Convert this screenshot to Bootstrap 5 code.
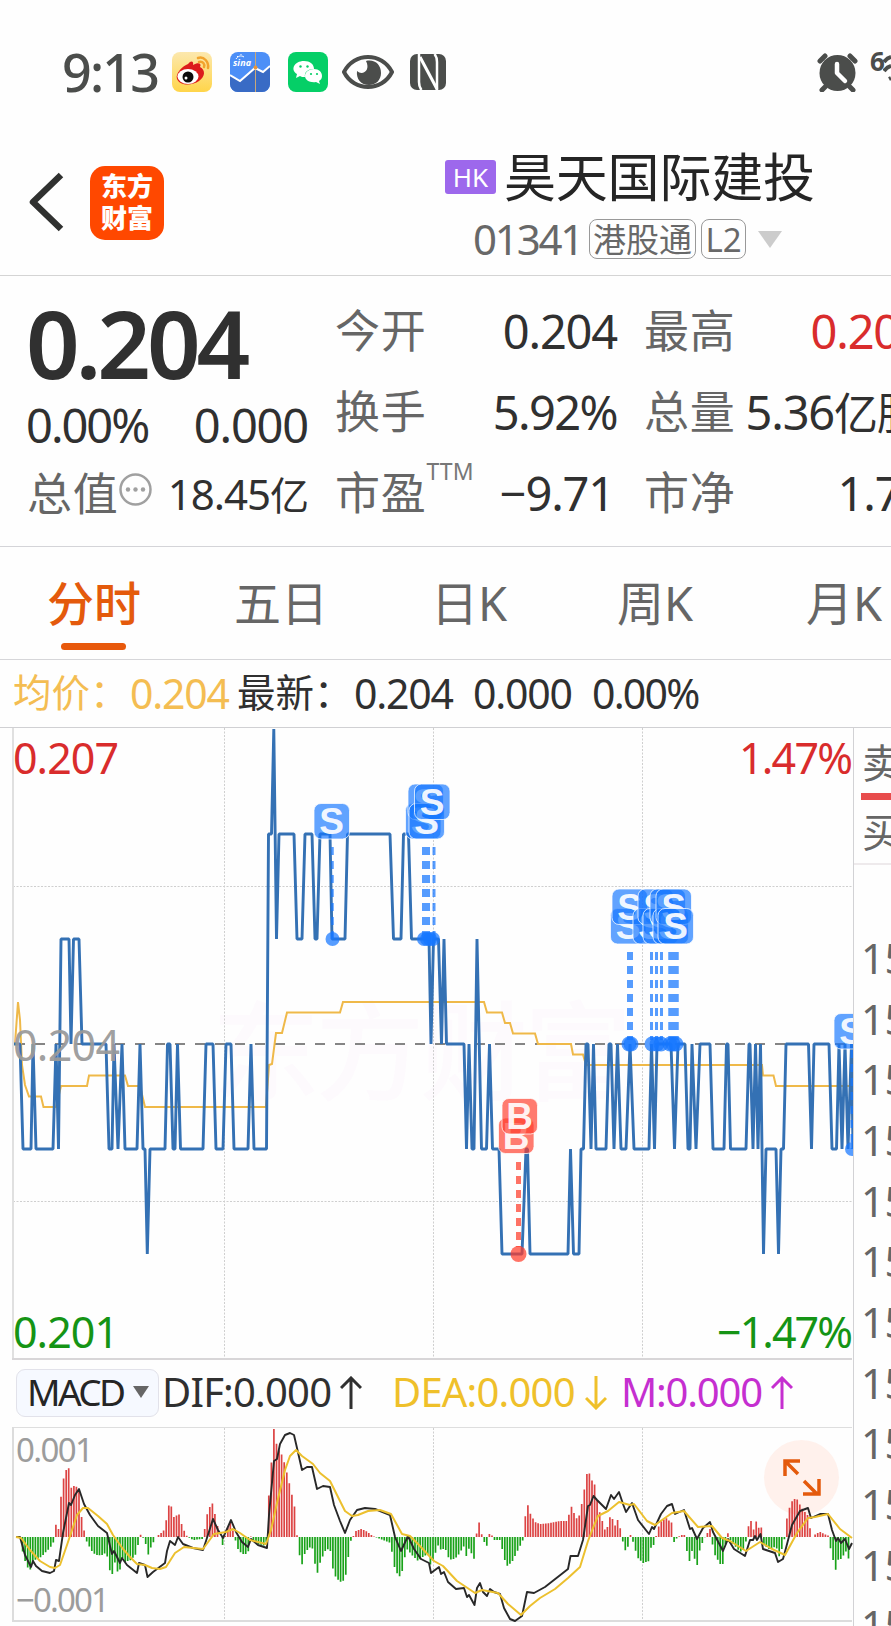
<!DOCTYPE html>
<html lang="zh-CN">
<head>
<meta charset="utf-8">
<meta name="viewport" content="width=device-width, initial-scale=1">
<title>昊天国际建投 01341</title>
<link href="https://cdn.jsdelivr.net/npm/bootstrap@5.3.0/dist/css/bootstrap.min.css" rel="stylesheet">
<style>
  body{width:891px;height:1626px;overflow:hidden;background:#fefefe;color:#303030;
    font-family:"Noto Sans","Noto Sans CJK SC",sans-serif;line-height:1;font-size:46px;white-space:nowrap}
  svg{display:block;flex:none}
  .status{height:131px;padding:12px 0 0 62px}
  .clock{font-size:52px;font-weight:500;color:#4b4d4b;width:110px;letter-spacing:-1.8px}
  .status-icons{gap:18px}
  .six{font-size:26px;font-weight:700;color:#4b4d4b;width:13px;margin:-22px 0 0 12px;letter-spacing:-2px}
  .head{height:145px;border-bottom:1px solid #d4d4d4}
  .back{margin:-2px 25px 0 28px}
  .logo{width:74px;height:74px;border-radius:15px;background:#ff4800;color:#fff;font-weight:900;font-size:26px;line-height:32px;padding-top:4px}
  .head-main{margin-left:281px;width:400px;margin-top:2px}
  .hk{width:51px;height:34px;background:#9d68ec;color:#fff;border-radius:3px;font-size:26px;margin-right:8px}
  .stock{font-size:52px;color:#252525;letter-spacing:-.2px;margin-top:-1px}
  .code{font-size:42px;color:#686868;letter-spacing:-2.2px;width:116px;margin-left:28px}
  .chip{height:40px;border:1.5px solid #999;border-radius:8px;color:#686868;font-size:33px}
  .quote{height:271px;border-bottom:1px solid #d4d4d8;padding:14px 0 0 27px}
  .q-row{height:81px}
  .quote>div{flex:none}
  .colA{width:281px;margin-right:27px}
  .colB{width:282px;margin-right:27px}
  .colC{width:280px}
  .lab{color:#666;font-size:45px;letter-spacing:.8px}
  .num{font-size:47px;letter-spacing:-1.2px;padding-top:2px}
  .big{font-size:94px;font-weight:600;letter-spacing:-4.2px;height:106px;margin-left:-1px}
  .ttm{font-size:23px;color:#777;margin-top:-42px}
  .tabs{height:113px;border-bottom:1px solid #d6d6d9;color:#666}
  .tabs .tab-i{height:110px;padding-top:2px;font-size:47px;position:relative}
  .tab-on{color:#e45a0c;font-weight:500}
  .tab-on::after{content:"";position:absolute;left:14px;top:96px;width:65px;height:7px;border-radius:4px;background:#e8590c}
  .info{height:68px;border-bottom:1px solid #d0d0d3;font-size:41px;letter-spacing:-1.2px}
  .info .zh{font-size:38.5px;letter-spacing:0;margin-top:-2px}
  .avg{color:#f4bd52}
  .plot{width:853px;flex:none;overflow:hidden}
  .side{width:38px;height:898px;border-left:1px solid #d2d2d5;color:#666;overflow:hidden;font-size:41px}
  .side .ask{height:137px;border-bottom:2px solid #eeeaec;padding-left:8px;font-size:40px}
  .side .bar{height:7px;background:#e84c4c;margin-left:-1px}
  .side .tick{height:60.7px;padding-left:7px}
  .macd-row{height:66px;padding-left:16px;font-size:40px;letter-spacing:-.8px}
  .macd-row>*{flex:none}
  .macd-row>span{margin-top:-2px}
  .macd-btn{width:143px;height:48px;background:#f6f9ff;border:1px solid #e2e2ea;border-radius:9px;font-size:37px;padding:0 0 3px 10px;letter-spacing:-2.6px;color:#252525}
</style>
</head>
<body>
<div class="status d-flex align-items-center">
  <div class="clock">9:13</div>
  <div class="status-icons d-flex align-items-center">
    <svg width="40" height="40" viewBox="0 0 40 40"><defs><linearGradient id="wb" x2="0" y2="1"><stop stop-color="#fce8ae"/><stop offset="1" stop-color="#ffd54a"/></linearGradient></defs><rect width="40" height="40" rx="8" fill="url(#wb)"/><path d="M16 12c3-4 6-3 5 1 5-3 9-2 7 2 6 3 5 10-1 14-7 5-19 5-22-2-2-6 6-13 11-15z" fill="#dc1c1c"/><ellipse cx="16" cy="24.500" rx="10.500" ry="7.500" fill="#fff"/><circle cx="16" cy="25" r="5.500" fill="#0c0c0c"/><circle cx="14" cy="26" r="1.500" fill="#fff"/><path d="M26 6c6-2 11 4 10 10M27 10c4-1 6 2 5 5" fill="none" stroke="#f2a32d" stroke-width="2.500" stroke-linecap="round"/></svg>
    <svg width="40" height="40" viewBox="0 0 40 40"><rect width="40" height="40" rx="8" fill="#4c8ff7"/><path d="M0 23l10 6 15-13 8 4 7-6v18a8 8 0 0 1-8 8H8a8 8 0 0 1-8-8z" fill="#396bc5"/><path d="M25.500 0v40" stroke="#c9a878" stroke-width="1"/><path d="M0 23l10 6 15-13 8 4 7-6" fill="none" stroke="#fff" stroke-width="2"/><circle cx="25.500" cy="15.500" r="2" fill="#e8953a"/><path d="M6 7c2-3 5-4 8-2M8 5l-1-1M11 3V2" stroke="#fff" fill="none"/><text x="3" y="14" font-size="9" font-weight="700" font-style="italic" fill="#fff" textLength="18">sina</text></svg>
    <svg width="40" height="40" viewBox="0 0 40 40"><rect width="40" height="40" rx="8" fill="#05cf67"/><path d="M16 9c6 0 10 3 10 8-6 0-10 3-9 8-2 0-4 0-5-1l-4 2 1-4C2 18 6 9 16 9z" fill="#fff"/><path d="M26 17c5 0 8 3 8 7 0 2-1 4-3 5l1 3-4-2c-6 1-11-2-11-6s4-7 9-7z" fill="#fff"/><g fill="#05cf67"><circle cx="12.500" cy="14.500" r="1.200"/><circle cx="19.500" cy="14.500" r="1.200"/><circle cx="23" cy="22" r="1.100"/><circle cx="29" cy="22" r="1.100"/></g></svg>
    <svg style="margin-left:-4px" width="52" height="36" viewBox="0 0 52 36"><path d="M2 18C12-2 40-2 50 18 40 38 12 38 2 18z" fill="none" stroke="#4b4d4b" stroke-width="4"/><path d="M24 7c9-2 15 4 15 12 0 7-5 12-12 12-8 0-13-6-12-14 5 5 14 0 9-10z" fill="#4b4d4b"/></svg>
    <svg style="margin-left:-2px" width="36" height="36" viewBox="0 0 36 36"><rect width="36" height="36" rx="7" fill="#4b4d4b"/><path d="M9 0v28q0 5 2.500 8M27 36V8q0-5-2.500-8" fill="none" stroke="#fff" stroke-width="2.500"/><path d="M10 3l17 32" stroke="#fff" stroke-width="3"/></svg>
  </div>
  <svg class="ms-auto" width="41" height="40" viewBox="0 0 41 40"><g stroke="#4b4d4b" stroke-width="5" stroke-linecap="round"><path d="M3 9l5-5M38 9l-5-5M8 35l-3 3M33 35l3 3"/></g><circle cx="20.500" cy="21" r="18" fill="#4b4d4b"/><path d="M20 12v9l8 8" fill="none" stroke="#fff" stroke-width="4.500" stroke-linecap="round" stroke-linejoin="round"/></svg>
  <div class="six">6</div>
  <svg width="8" height="40" viewBox="0 0 8 40"><path d="M1 10q3-4 7-5M1 19q3-4 7-5M6 27l2-1" stroke="#4b4d4b" stroke-width="4" fill="none"/></svg>
</div>

<header class="head d-flex align-items-center">
  <svg class="back" width="37" height="60" viewBox="0 0 37 60"><path d="M33 3L5 30l28 27" fill="none" stroke="#303130" stroke-width="6.500" stroke-linejoin="round"/></svg>
  <div class="logo text-center" style="margin-top:-1px">东方<br>财富</div>
  <div class="head-main">
    <div class="d-flex align-items-center" style="height:70px">
      <span class="hk d-flex align-items-center justify-content-center">HK</span><span class="stock">昊天国际建投</span>
    </div>
    <div class="d-flex align-items-center" style="height:54px">
      <span class="code">01341</span>
      <span class="chip d-flex align-items-center justify-content-center" style="width:107px">港股通</span>
      <span class="chip d-flex align-items-center justify-content-center" style="width:45px;margin-left:5px">L2</span>
      <svg style="margin-left:12px" width="24" height="17"><path d="M0 0h24L12 17z" fill="#ccc"/></svg>
    </div>
  </div>
</header>

<section class="quote d-flex">
  <div class="colA">
    <div class="big d-flex align-items-center">0.204</div>
    <div class="d-flex align-items-center justify-content-between" style="height:57px"><span class="num" style="letter-spacing:-2px;margin-left:-1px">0.00%</span><span class="num">0.000</span></div>
    <div class="d-flex align-items-center q-row"><span class="lab">总值</span>
      <svg style="margin:-8px 0 0 0" width="33" height="33" viewBox="0 0 33 33"><circle cx="16.500" cy="16.500" r="15" fill="none" stroke="#a0a0a0" stroke-width="2.500"/><g fill="#a0a0a0"><circle cx="9" cy="16.500" r="2.200"/><circle cx="16.500" cy="16.500" r="2.200"/><circle cx="24" cy="16.500" r="2.200"/></g></svg>
      <span class="ms-auto" style="font-size:42px;letter-spacing:-1px">18.45<span style="font-size:39px">亿</span></span></div>
  </div>
  <div class="colB">
    <div class="d-flex align-items-center justify-content-between q-row"><span class="lab">今开</span><span class="num">0.204</span></div>
    <div class="d-flex align-items-center justify-content-between q-row"><span class="lab">换手</span><span class="num" style="letter-spacing:-1.600px">5.92%</span></div>
    <div class="d-flex align-items-center q-row"><span class="lab">市盈</span><span class="ttm">TTM</span><span class="num ms-auto" style="margin-right:3px">−9.71</span></div>
  </div>
  <div class="colC">
    <div class="d-flex align-items-center q-row"><span class="lab">最高</span><span class="num" style="color:#d92c2c;margin-left:75px">0.207</span></div>
    <div class="d-flex align-items-center q-row"><span class="lab">总量</span><span class="num" style="margin-left:10px">5.36<span style="font-size:44px">亿股</span></span></div>
    <div class="d-flex align-items-center q-row"><span class="lab">市净</span><span class="num" style="margin-left:102px">1.70</span></div>
  </div>
</section>

<nav class="tabs d-flex">
  <div class="tab-i tab-on d-flex align-items-center" style="margin-left:47px;width:187px">分时</div>
  <div class="tab-i d-flex align-items-center" style="width:197px">五日</div>
  <div class="tab-i d-flex align-items-center" style="width:186px">日K</div>
  <div class="tab-i d-flex align-items-center" style="width:189px">周K</div>
  <div class="tab-i d-flex align-items-center">月K</div>
</nav>

<div class="info d-flex align-items-center">
  <span class="zh avg" style="margin-left:13px;width:117px">均价：</span><span class="avg" style="width:107px">0.204</span>
  <span class="zh" style="width:117px">最新：</span><span style="width:119px">0.204</span><span style="width:119px">0.000</span><span style="letter-spacing:-1.800px">0.00%</span>
</div>

<main class="d-flex">
  <div class="plot">
    <svg width="853" height="632" viewBox="0 728 853 632" id="price">
      <text x="212" y="1092" font-size="108" font-weight="500" textLength="420" fill="#fdfafd">东方财富</text>
      <g stroke="#cfcfcf" stroke-dasharray="2 1.500" fill="none"><path d="M224.500 728V1359M433.500 728V1359M642.500 728V1359M13 886.500H853M13 1201.500H853"/></g>
      <path d="M13 728V1359" stroke="#e0e0e0" stroke-width="2"/><path d="M12 1359H852" stroke="#d8d6d8" stroke-width="2"/>
      <path d="M15 1044H852" stroke="#858585" stroke-width="2" stroke-dasharray="10 10"/>
      <polyline fill="none" stroke="#efb949" stroke-width="2" points="15,1044 18,1002 20,1020 22,1065 25,1085 29,1096.5 41,1096.5 43.5,1107 56,1107 61,1086 87,1086 89,1075.5 125,1075.5 128,1086 140,1086 145,1107 266,1107 269,1065 272,1064 276,1033 282,1033 287,1012.5 340,1012.5 343,1002 484,1002 487,1012.5 502,1012.5 505,1023 510,1023 513,1033.5 535,1033.5 538,1044 571,1044 573,1054.5 583,1054.5 586,1065 762,1065 763,1075.500 773.500,1075.500 776,1086 852,1086"/>
      <polyline fill="none" stroke="#3471b4" stroke-width="2.900" stroke-linejoin="bevel" points="14,1044 20,1044 23,1149 31,1149 33,1044 36,1149 53,1149 56,1044 58.5,1149 61,939 69,939 71,1044 73.5,939 79,939 82,1044 106,1044 109,1149 112,1149 114,1044 118,1149 122,1044 125,1149 137,1149 140,1044 143,1149 145,1149 147.3,1254 150,1149 165,1149 167.5,1044 170,1044 173,1149 175,1149 177.5,1044 180.5,1149 203,1149 206,1044 213,1044 216,1149 223,1149 226,1044 231,1044 234,1149 248,1149 251,1044 254,1149 266.5,1149 268.5,834 271.5,834 273.8,729 276.5,939 279,834 294,834 297,939 302,939 305,834 312,834 315,939 317,939 320,834 330,834 332,939 345,939 347.5,834 390,834 393.5,939 401,939 403.5,834 408.5,834 411.5,939 429,939 431,1044 433.5,939 438.5,939 441.5,1044 444,939 446.5,1044 464,1044 466.5,1149 469,1044 472,1149 474,1149 477,939 481.5,1149 486.5,1149 489.5,1044 492.5,1149 499,1149 502,1254 522,1254 526,1149 527.5,1149 530,1254 568,1254 570.5,1149 573.5,1254 579,1254 581,1149 583.5,1149 586,1044 588,1044 591,1149 593.5,1044 596,1149 606,1149 609,1044 611,1044 614,1149 617.5,1044 621,1149 626,1149 630,1044 634,1149 649,1149 651.5,1044 654.5,1149 657,1044 671,1044 674.5,1149 678,1044 685,1044 688,1149 690,1149 692,1044 696,1149 700,1044 710,1044 713,1149 724,1149 726.5,1044 728,1044 730.5,1149 746,1149 749,1044 750,1044 753,1149 755.5,1044 758,1149 760.5,1044 763.5,1254 766,1149 776,1149 778.5,1254 781,1149 783.5,1149 786,1044 808.5,1044 811.5,1149 814,1044 829,1044 832,1149 836.5,1149 839,1044 842,1149 845,1044 848,1149 851.5,1044 853,1149"/>
      <g id="marks"></g>
      <g font-size="43">
        <text x="13" y="774" textLength="106" fill="#d92c2c">0.207</text>
        <text x="853" y="774" text-anchor="end" textLength="114" fill="#d92c2c">1.47%</text>
        <text x="13" y="1061" textLength="107" fill="#9a9a9a" fill-opacity=".95">0.204</text>
        <text x="13" y="1348" textLength="106" fill="#159415">0.201</text>
        <text x="853" y="1348" text-anchor="end" textLength="136" fill="#159415">−1.47%</text>
      </g>
    </svg>
    <div class="macd-row d-flex align-items-center">
      <div class="macd-btn d-flex align-items-center"><span style="width:106px">MACD</span><svg width="16" height="12"><path d="M0 0h16L8 12z" fill="#666"/></svg></div>
      <span style="margin-left:3px;width:178px">DIF:0.000</span>
      <svg width="22" height="34" viewBox="0 0 22 34"><path d="M11 33V2M1 12L11 2l10 10" fill="none" stroke="#303030" stroke-width="3"/></svg>
      <span style="margin-left:30px;width:193px;letter-spacing:-.8px;color:#efc02a">DEA:0.000</span>
      <svg width="22" height="34" viewBox="0 0 22 34"><path d="M11 0v31M1 22l10 10 10-10" fill="none" stroke="#efc02a" stroke-width="3"/></svg>
      <span style="margin-left:14px;width:150px;letter-spacing:-1.200px;color:#c52fd0">M:0.000</span>
      <svg width="22" height="34" viewBox="0 0 22 34"><path d="M11 33V2M1 12L11 2l10 10" fill="none" stroke="#c52fd0" stroke-width="3"/></svg>
    </div>
    <svg width="853" height="200" viewBox="0 1426 853 200">
      <circle cx="801.500" cy="1477.500" r="37.500" fill="#fff1ec"/>
      <path d="M224.500 1428V1620M433.500 1428V1620M642.500 1428V1620" stroke="#cfcfcf" stroke-dasharray="2 1.500"/>
      <path d="M13 1427.500H852" stroke="#dedede"/><path d="M13 1427V1622M12 1621H852" stroke="#dcdcdc" stroke-width="2" fill="none"/>
      <path id="up" stroke="#dc4343" stroke-width="1.700"/><path id="down" stroke="#19a219" stroke-width="1.700"/>
      <polyline fill="none" stroke="#282828" stroke-width="1.900" stroke-linejoin="round" points="16,1537 20,1537 25,1555 31,1567 33,1561 36,1566 42,1571 50,1573 54,1571 56,1560 59,1561 63,1533 69,1503 71,1505 75,1495 79,1489 84,1504 90,1515 98,1526 107,1533 110,1546 112,1554 114,1551 117,1557 120,1563 122,1558 127,1565 137,1573 139,1563 145,1565 147.5,1577 153,1572 165,1563 167,1551 170,1541 175,1545 178,1537 183,1544 193,1548 203,1550 206,1541 213,1519 218,1530 223,1538 231,1520 236,1532 242,1542 248,1547 251,1539 258,1545 267,1548 269,1515 274,1461 277,1459 280,1444 285,1435 290,1433 294,1435 297,1448 302,1470 307,1467 312,1467 317,1489 323,1486 330,1487 334,1505 340,1521 345,1533 350,1520 357,1510 365,1508 375,1509 390,1515 395,1537 401,1551 408,1536 414,1549 421,1559 429,1563 431,1573 439,1567 441,1574 444,1572 448,1582 456,1589 464,1588 467,1597 469,1595 474.5,1605 477,1588 480,1583 483,1592 487,1596 490,1589 494,1592 500,1594 504,1608 510,1619 515,1621 522,1616 527,1592 534,1593 545,1587 568,1569 570.5,1556 578,1556 583,1540 588,1506 590,1505 593.5,1496 597,1500 606,1509 611,1495 614,1499 619,1492 623,1504 626,1512 632,1503 638,1520 649,1534 652,1527 654,1529 661,1514 667,1506 672,1504 675,1514 684,1510 690,1529 692,1528 697,1539 703,1528 710,1522 713,1532 723,1551 728,1539 734,1549 745,1556 750,1540 753,1540 755,1536 757,1540 760.5,1534 763,1549 775,1553 778,1562 783,1559 786,1548 792,1525 800,1511 808,1508 811,1518 820,1514 828,1514 832,1530 836,1541 838,1538 841,1543 845,1539 849,1549 852,1543"/>
      <polyline fill="none" stroke="#ecc02e" stroke-width="2" stroke-linejoin="round" points="16,1537 21,1538 30,1550 40,1561 50,1567 55,1568 60,1565 67,1545 77,1515 83,1508 88,1508 98,1516 107,1524 113,1535 123,1549 131,1558 137,1564 145,1565 152,1568 160,1569 166,1567 175,1553 184,1547 203,1549 214,1534 220,1533 226,1532 233,1529 240,1533 250,1540 266,1544 271,1530 277,1503 285,1470 290,1456 296,1450 302,1456 313,1464 320,1473 330,1481 345,1511 352,1516 358,1515 368,1511 380,1510 391,1514 402,1534 410,1536 418,1544 434,1561 443,1566 457,1581 475,1593 482,1590 498,1593 508,1604 521,1615 530,1606 540,1598 555,1589 568,1578 580,1567 588,1541 593,1528 598,1516 608,1511 619,1502 630,1505 634,1504 647,1521 655,1525 672,1513 684,1511 698,1527 712,1526 722,1538 730,1541 746,1551 760,1542 772,1549 785,1555 797,1533 808,1518 815,1517 828,1514 840,1529 852,1538"/>
      <path d="M798 1474l-13-13M785 1476v-15h15M804 1481l13 13M819 1479v15h-16" fill="none" stroke="#e45a0c" stroke-width="3.500"/>
      <g font-size="33" fill="#9c9c9c"><text x="16" y="1462" textLength="78">0.001</text><text x="16" y="1612" textLength="94">−0.001</text></g>
    </svg>
  </div>
  <aside class="side">
    <div class="ask d-flex flex-column">
      <div style="height:65px;padding-top:15px">卖</div><div class="bar" style="width:40px"></div><div style="padding-top:12px">买</div>
    </div>
    <div style="height:63px"></div>
    <div id="ticks"></div>
  </aside>
</main>
<script src="https://cdn.jsdelivr.net/npm/bootstrap@5.3.0/dist/js/bootstrap.bundle.min.js"></script>
<script>
// Trade markers: dashed guides, dots and lettered badges
let m='';
const dash=(x,w,y1,y2,c)=>m+=`<path d="M${x} ${y1}V${y2}" stroke="${c}" stroke-width="${w}" stroke-dasharray="8 6" opacity=".72"/>`;
const dot=(x,y,c,r=7)=>m+=`<circle cx="${x}" cy="${y}" r="${r}" fill="${c}" opacity=".72"/>`;
const tag=(x,y,t,c)=>m+=`<rect x="${x}" y="${y}" width="35.5" height="35.5" rx="7" fill="${c}" fill-opacity=".68" stroke="#fff" stroke-opacity=".75"/><text x="${x+17.7}" y="${y+30.5}" font-family="Liberation Sans" font-size="37" font-weight="700" fill="#fff" fill-opacity=".92" text-anchor="middle">${t}</text>`;
const B='#1677ff',R='#ff3d2b';
dash(332.5,2.5,847,939,B);dot(332.5,939,B);
dash(426,8,847,939,B);dash(434,3,847,939,B);[424,427,430,433].forEach(x=>dot(x,939,B));
dash(630,6,952,1040,B);[651.5,656.5,661.5].forEach(x=>dash(x,3,952,1040,B));dash(673.5,10.500,952,1040,B);
[629,631,652,657,661,670,673,676].forEach(x=>dot(x,1044,B,7.5));
tag(314,803.5,'S',B);[[405.500,803.5],[408,784],[409,803.5],[414.5,784],[610.5,908.5],[612,889],[633,908.5],[638,889],[643,908.5],[650,889],[653,908.5],[656,889],[658,908.5]].forEach(p=>tag(p[0],p[1],'S',B));
dash(852,3,1050,1149,B);dot(852,1149,B);tag(834,1013.5,'S',B);
dash(518.5,5,1162,1247,R);dot(518.5,1254,R,8);tag(498.5,1118,'B',R);tag(502,1098.5,'B',R);
document.getElementById('marks').innerHTML=m;

// MACD histogram: x, signed height
const H=[20,0,23,-17,26,-27,28,-31,31,-33,33,-26,36,-22,41,-20,45,-16,49,-12,53,-7,54.5,0,56,13,58.5,8,61,40,63.5,58,66,67,69,69,71,49,74,51,77,50,79,48,81,23,84,7,86,-3,89,-9,93,-16,98,-18.5,103,-18,106.5,-15,109,-31,112,-40,114,-22,117,-34,119.5,-36,122,-20,125,-25,131,-23,137,-16,139.5,4,142,0,145,-2,147.5,-20,150,-12,153,-6,156,0,160,3,165,8,167.5,26,170,37,172.5,25,175,16,178,27,180.5,16,183,9,186,2,188,0,193,-3,203,-2,206,16,208,27,211,32,213,34,216,17,218,9,221,-4,223,-9,226,5,230,15,232.5,8,235,-2,238,-12,242,-17,248,-17,250,2,253,-3,258,-7,266,-9,269,45,271.5,76,274,109,277,90,282,82,285,72,290,51,295,28,297,2,299,-16,302,-28,304,-18,308,-12,312,-9,315,-27,317,-38,320,-26,325,-14,330,-11,332,-28,335,-39,340,-45,345,-43,348,-22,351,-3,353,0,356,6,361,8,366,6,373,1,378,-1,391,-6,393,-25,396,-35,401,-41,404,-23,407,-12,412,-18,418,-24,424,-19,428,-17,431,-30,434,-20,439,-6,442,-18,444,-8,449,-22,452,-23,457,-20,464,-9,467,-22,469,-11,475,-24,477,11,479.5,15,482,1,485,-7,487,-9,490,6,494,-3,501,-3,503,-18,507,-29,512,-25,518,-13,523,-3,525,19,527.5,33,530,24,535,15,540,13,550,14,560,16,568,16,570.5,33,573,26,578,16,581,30,583,38,586,60,588.5,69,591,54,593.5,60,596,42,599,27,604,10,606,4,609,17,611.5,24,614,9,617,16,619,19,621,2,624,-9,626.5,-17,629,-4,631,4,634,-9,638,-21,643,-26,649,-24,652,-4,654,-9,657,5,660,15,666,19,672,14,674,-5,677,-1,681,2,685,2,687,-15,690,-26,692,-14,697,-29,700,-12,703,-4,706,2,710,8,712,-5,715,-18,720,-27,723,-27,725,-9,728,4,730,-3,740,-15,745,-12,747,5,750.5,19,753,4,755.5,19,758,6,760.5,17,763,-7,770,-13,776,-9,779,-20,784,-6,786,14,789,28,793,38,797,38,801,30,809,20,811,-2,814,2,820,5,829,1,831,-15,836,-34,839,-19,842,-24,845,-12,849,-23,852,-5];
let u='',d='',k=0;
for(let i=0;i<326;i++){
  const x=20+i*2.565; if(x>851)break;
  while(k<H.length-4&&H[k+2]<x)k+=2;
  const t=(x-H[k])/(H[k+2]-H[k]), h=H[k+1]+t*(H[k+3]-H[k+1]);
  const s=`M${x.toFixed(1)} 1537V${(1537-h).toFixed(1)}`;
  h>0?u+=s:d+=s;
}
document.getElementById('up').setAttribute('d',u);
document.getElementById('down').setAttribute('d',d);
document.getElementById('ticks').innerHTML='<div class="tick d-flex align-items-center">15</div>'.repeat(12);
</script>
</body>
</html>
